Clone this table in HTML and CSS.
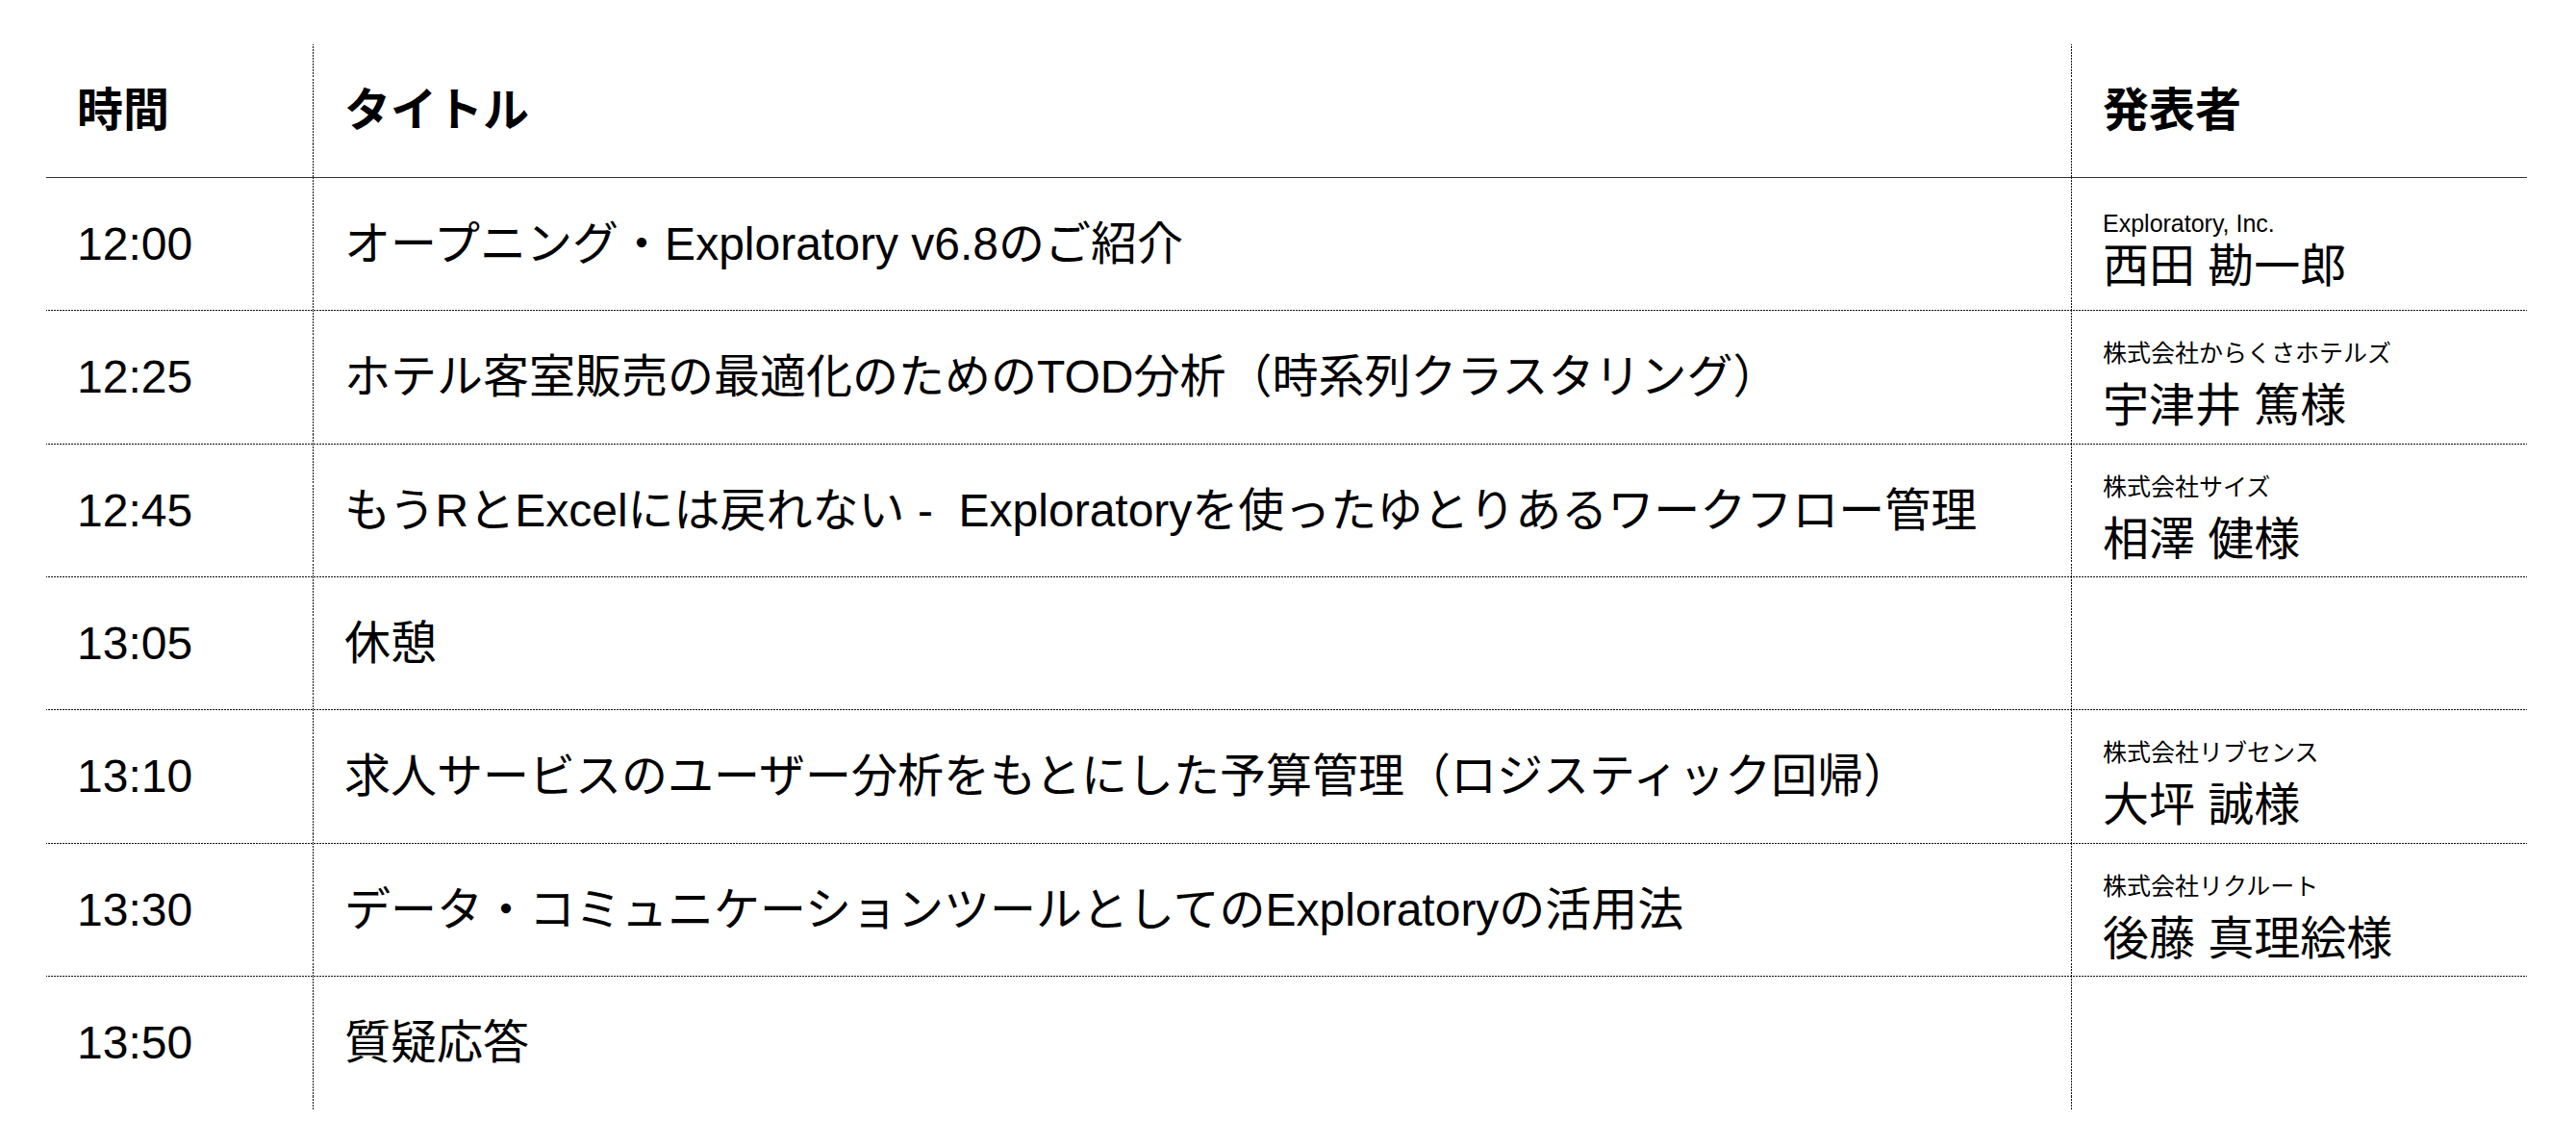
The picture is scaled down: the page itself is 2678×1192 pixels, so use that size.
FILE: index.html
```html
<!DOCTYPE html>
<html lang="ja">
<head>
<meta charset="utf-8">
<title>タイムテーブル</title>
<link rel="stylesheet" href="styles.css">
</head>
<body>
<div class="schedule">
  <div class="row head">
    <div class="cell time">時間</div>
    <div class="cell title">タイトル</div>
    <div class="cell speaker-h">発表者</div>
  </div>
  <div class="row">
    <div class="cell time">12:00</div>
    <div class="cell title">オープニング・Exploratory v6.8のご紹介</div>
    <div class="cell speaker"><div class="org org-en" lang="en">Exploratory, Inc.</div><div class="name">西田 勘一郎</div></div>
  </div>
  <div class="row">
    <div class="cell time">12:25</div>
    <div class="cell title">ホテル客室販売の最適化のためのTOD分析（時系列クラスタリング）</div>
    <div class="cell speaker"><div class="org">株式会社からくさホテルズ</div><div class="name">宇津井 篤様</div></div>
  </div>
  <div class="row">
    <div class="cell time">12:45</div>
    <div class="cell title">もうRとExcelには戻れない - &nbsp;Exploratoryを使ったゆとりあるワークフロー管理</div>
    <div class="cell speaker"><div class="org">株式会社サイズ</div><div class="name">相澤 健様</div></div>
  </div>
  <div class="row">
    <div class="cell time">13:05</div>
    <div class="cell title">休憩</div>
    <div class="cell speaker"></div>
  </div>
  <div class="row">
    <div class="cell time">13:10</div>
    <div class="cell title">求人サービスのユーザー分析をもとにした予算管理（ロジスティック回帰）</div>
    <div class="cell speaker"><div class="org">株式会社リブセンス</div><div class="name">大坪 誠様</div></div>
  </div>
  <div class="row">
    <div class="cell time">13:30</div>
    <div class="cell title">データ・コミュニケーションツールとしてのExploratoryの活用法</div>
    <div class="cell speaker"><div class="org">株式会社リクルート</div><div class="name">後藤 真理絵様</div></div>
  </div>
  <div class="row last">
    <div class="cell time">13:50</div>
    <div class="cell title">質疑応答</div>
    <div class="cell speaker"></div>
  </div>
</div>
</body>
</html>
```
FILE: styles.css
```css
html, body {
  margin: 0;
  padding: 0;
  background: #fff;
}

body {
  font-family: "Liberation Sans", "Noto Sans CJK JP", sans-serif;
  color: #000;
}

.schedule {
  margin: 46px 0 0 48px;
  width: 2579px;
}

.row {
  display: grid;
  grid-template-columns: 277px 1828px 474px;
  height: 138.33px;
  box-sizing: border-box;
  border-bottom: 1px solid transparent;
  border-image: repeating-linear-gradient(to right, #111 0 2px, transparent 2px 3px) 1;
}

.row.head {
  height: 139px;
  border-bottom: 1px solid #333;
  border-image: none;
  font-weight: 700;
}

.row.last {
  border-bottom: none;
  border-image: none;
}

.cell {
  box-sizing: border-box;
  padding: 0 32px;
  font-size: 48px;
  line-height: 57.6px;
}

.time,
.title,
.speaker-h {
  display: flex;
  align-items: center;
}

.title,
.speaker,
.speaker-h {
  border-left: 1px solid transparent;
  border-image: repeating-linear-gradient(to bottom, #111 0 2px, transparent 2px 3px) 1;
}

.title {
  white-space: nowrap;
}

.speaker {
  padding-top: 29px;
}

.org {
  font-size: 25px;
  line-height: 30px;
  white-space: nowrap;
}

.org-en {
  padding-top: 3px;
  margin-bottom: -10px;
}

.name {
  margin-top: 15px;
  font-size: 48px;
  line-height: 50px;
  white-space: nowrap;
}
```
